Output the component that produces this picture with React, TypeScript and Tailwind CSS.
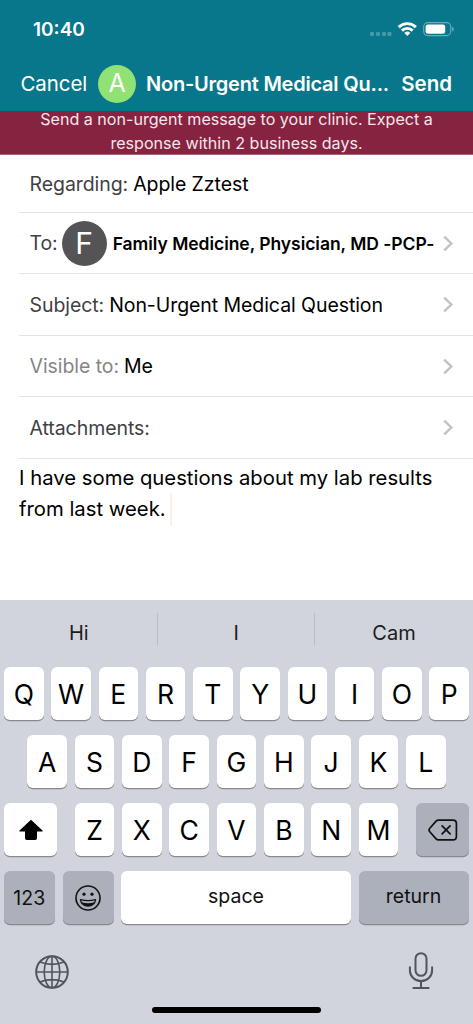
import type { ReactNode } from 'react'

interface RowProps {
  label: string;
  labelClass?: string;
  className: string;
  chevron?: boolean;
  children?: ReactNode;
}

const topKeys = ['Q', 'W', 'E', 'R', 'T', 'Y', 'U', 'I', 'O', 'P']
const middleKeys = ['A', 'S', 'D', 'F', 'G', 'H', 'J', 'K', 'L']
const bottomKeys = ['Z', 'X', 'C', 'V', 'B', 'N', 'M']

function Chevron() {
  return (
    <svg className="w-[10px] h-[17px] shrink-0" viewBox="0 0 10 17" fill="none" stroke="#c2c2c4" strokeWidth="2.4">
      <path d="M1.2 1.6 8.3 8.5 1.2 15.4" />
    </svg>
  )
}

function Row({ label, labelClass = 'text-[#3f3f44]', className, chevron = true, children }: RowProps) {
  return (
    <div className={`ml-[19px] pl-[10.5px] pr-[20.5px] flex items-center border-b border-[#e3e3e5] whitespace-nowrap text-[19.5px] tracking-[-0.07px] ${className}`}>
      <span className={`pt-[2px] ${labelClass}`}>{label}</span>
      {children}
      {chevron && <div className="ml-auto flex"><Chevron /></div>}
    </div>
  )
}

function Key({ letter }: { letter: string }) {
  return (
    <div className="w-[39.6px] h-[53px] rounded-[6px] bg-white shadow-[0_1.3px_0_#898a8d] flex items-center justify-center text-[26.5px] pt-[3px]">
      {letter}
    </div>
  )
}

function StatusIcons() {
  return (
    <svg className="w-[86px] h-[18px]" viewBox="0 0 86 18">
      <g fill="#fff" opacity="0.25">
        <rect x="1" y="12" width="4" height="4" rx="1.2" />
        <rect x="7" y="12" width="4" height="4" rx="1.2" />
        <rect x="13" y="12" width="4" height="4" rx="1.2" />
        <rect x="18.5" y="12" width="4" height="4" rx="1.2" />
      </g>
      <g transform="translate(0 1)">
        <g fill="none" stroke="#fff" strokeWidth="2.9">
          <path d="M29.7 6.1a12.3 12.3 0 0 1 17.2 0" />
          <path d="M33 9.6a7.5 7.5 0 0 1 10.6 0" />
        </g>
        <path d="M35.3 12a4.3 4.3 0 0 1 6 0l-3 3.1z" fill="#fff" />
        <rect x="54.7" y="1.6" width="27" height="13" rx="4" fill="none" stroke="#fff" strokeOpacity="0.4" strokeWidth="1.1" />
        <rect x="56.6" y="3.4" width="19.6" height="9.4" rx="2.3" fill="#fff" />
        <path d="M83.2 5.8c2 .9 2 3.8 0 4.6z" fill="#fff" opacity="0.45" />
      </g>
    </svg>
  )
}

function ShiftIcon() {
  return (
    <svg className="w-[26px] h-[22px]" viewBox="0 0 26 22">
      <path d="M13 .7 24.5 11.5q.9 1.1-.5 1.1h-5v6.7q0 1.7-1.7 1.7H8.7Q7 21 7 19.3v-6.7H2q-1.4 0-.5-1.1z" />
    </svg>
  )
}

function DeleteIcon() {
  return (
    <svg className="w-[30px] h-[22px]" viewBox="0 0 30 22" fill="none" stroke="#111" strokeWidth="1.7" strokeLinejoin="round" strokeLinecap="round">
      <path d="M10.5 1.1H25q3.4 0 3.4 3.4v13q0 3.4-3.4 3.4H10.5q-1.4 0-2.4-1L1.8 12.7q-1.5-1.7 0-3.4L8.1 2.1q1-1 2.4-1z" />
      <path d="m14.1 6.9 8 8M22.1 6.9l-8 8" />
    </svg>
  )
}

function SmileyIcon() {
  return (
    <svg className="w-[28px] h-[28px]" viewBox="0 0 28 28">
      <circle cx="14" cy="14" r="12" fill="none" stroke="#111" strokeWidth="1.6" />
      <circle cx="10" cy="10.2" r="1.6" fill="#111" />
      <circle cx="18" cy="10.2" r="1.6" fill="#111" />
      <path d="M6.4 15.6q7.6 1.9 15.2 0c-.4 3.7-3.5 6.5-7.6 6.5s-7.2-2.8-7.6-6.5z" fill="none" stroke="#111" strokeWidth="1.2" strokeLinejoin="round" />
      <path d="M7.7 18.2q6.3 2.2 12.6 0c-1.1 2.5-3.4 3.9-6.3 3.9s-5.2-1.4-6.3-3.9z" fill="#111" />
    </svg>
  )
}

function GlobeIcon() {
  return (
    <svg className="w-[36px] h-[36px]" viewBox="0 0 36 36" fill="none" stroke="#52545a" strokeWidth="1.6">
      <circle cx="18" cy="18" r="15.8" strokeWidth="2" />
      <ellipse cx="18" cy="18" rx="7.8" ry="15.8" />
      <path d="M18 2v32M2 18h32M6 8q12 4.8 24 0M6 28q12-4.8 24 0" />
    </svg>
  )
}

function MicIcon() {
  return (
    <svg className="w-[26px] h-[38px]" viewBox="0 0 26 38" fill="none" stroke="#52545a" strokeWidth="2" strokeLinecap="round">
      <rect x="7.5" y="1.2" width="11" height="22.6" rx="5.5" />
      <path d="M1.9 15.2v3.3a11.1 10.5 0 0 0 22.2 0v-3.3M13 29v7M5.4 36h15.2" />
    </svg>
  )
}

export default function App() {
  return (
    <div className="w-[473px] h-[1024px] flex flex-col overflow-hidden bg-white font-[Inter,sans-serif] text-black">
      <header className="h-[111px] shrink-0 bg-[#08778b] text-white">
        <div className="h-[56px] pl-[33px] pr-[18px] pt-[2px] flex items-center justify-between">
          <span className="pt-[2px] text-[19px] font-semibold">10:40</span>
          <StatusIcons />
        </div>
        <div className="h-[55px] pl-[20.5px] pr-[21px] flex items-center whitespace-nowrap text-[20.5px]">
          <span className="w-[77.5px] pt-[2px] tracking-[-0.1px]">Cancel</span>
          <div className="w-[38px] h-[38px] rounded-full bg-[#90e274] flex items-center justify-center text-[25px]">A</div>
          <span className="ml-[10px] font-semibold text-[20px] tracking-[-0.22px]">Non-Urgent Medical Qu...</span>
          <span className="ml-auto pt-[1px] font-semibold text-[20.5px]">Send</span>
        </div>
      </header>

      <div className="h-[44px] shrink-0 bg-[#862341] border-b border-[#a8627a] text-[#f5e6eb] text-center text-[16.1px] whitespace-nowrap">
        <div className="h-[20px] leading-[16px]">Send a non-urgent message to your clinic. Expect a</div>
        <div className="leading-[25px]">response within 2 business days.</div>
      </div>

      <Row label="Regarding:" className="h-[58px]" chevron={false}>
        <span className="ml-[5px] pt-[2px]">Apple Zztest</span>
      </Row>
      <Row label="To:" className="h-[61px]">
        <div className="ml-[4px] w-[45px] h-[45px] rounded-full bg-[#545457] text-white flex items-center justify-center text-[30px]">F</div>
        <span className="ml-[6px] pt-[2px] font-semibold text-[17.5px] tracking-[-0.04px]">Family Medicine, Physician, MD -PCP-</span>
      </Row>
      <Row label="Subject:" className="h-[62px]">
        <span className="ml-[5px] pt-[2px]">Non-Urgent Medical Question</span>
      </Row>
      <Row label="Visible to:" labelClass="text-[#858585]" className="h-[61px]">
        <span className="ml-[5px] pt-[2px]">Me</span>
      </Row>
      <Row label="Attachments:" className="h-[62px]" />

      <div className="h-[141px] pl-[19px] pt-[3px] text-[20.3px] leading-[31px] whitespace-nowrap">
        <div>I have some questions about my lab results</div>
        <div className="flex">
          from last week.
          <span className="ml-[4px] w-[2px] h-[33px] bg-[#fdeee6]" />
        </div>
      </div>

      <div className="h-[424px] shrink-0 bg-[#d1d4dc] flex flex-col">
        <div className="h-[67px] shrink-0 flex text-center text-[20px] leading-[66px] text-[#1c1c1e]">
          <span className="w-[156.5px] pl-[1px]">Hi</span>
          <span className="mt-[13px] w-px h-[32px] bg-[#bbbdc3]" />
          <span className="w-[156.5px] pl-[1px]">I</span>
          <span className="mt-[13px] w-px h-[32px] bg-[#bbbdc3]" />
          <span className="flex-1">Cam</span>
        </div>

        <div className="px-[4px] flex flex-col gap-[15px]">
          <div className="flex justify-between">
            {topKeys.map(k => <Key key={k} letter={k} />)}
          </div>
          <div className="px-[23.3px] flex justify-between">
            {middleKeys.map(k => <Key key={k} letter={k} />)}
          </div>
          <div className="flex justify-between">
            <div className="w-[53px] h-[53px] rounded-[6px] bg-white shadow-[0_1.3px_0_#898a8d] flex items-center justify-center">
              <ShiftIcon />
            </div>
            <div className="w-[323.5px] flex justify-between">
              {bottomKeys.map(k => <Key key={k} letter={k} />)}
            </div>
            <div className="w-[53px] h-[53px] rounded-[6px] bg-[#abb0bb] shadow-[0_1.3px_0_#898a8d] flex items-center justify-center">
              <DeleteIcon />
            </div>
          </div>
          <div className="flex text-[19.5px] leading-[51px] text-center text-[#111]">
            <div className="w-[50.5px] h-[53px] rounded-[6px] bg-[#abb0bb] shadow-[0_1.3px_0_#898a8d] leading-[54px]">123</div>
            <div className="ml-[8px] w-[51.5px] h-[53px] rounded-[6px] bg-[#abb0bb] shadow-[0_1.3px_0_#898a8d] flex items-center justify-center">
              <SmileyIcon />
            </div>
            <div className="ml-[7px] w-[230px] h-[53px] rounded-[6px] bg-white shadow-[0_1.3px_0_#898a8d]">space</div>
            <div className="ml-[7.5px] w-[110px] h-[53px] rounded-[6px] bg-[#abb0bb] shadow-[0_1.3px_0_#898a8d]">return</div>
          </div>
        </div>

        <div className="mt-[28px] pl-[34px] pr-[39px] flex items-start justify-between">
          <div className="pt-[2px]"><GlobeIcon /></div>
          <MicIcon />
        </div>
        <div className="mx-auto mt-auto mb-[11px] w-[169px] h-[6px] rounded-full bg-black" />
      </div>
    </div>
  )
}
